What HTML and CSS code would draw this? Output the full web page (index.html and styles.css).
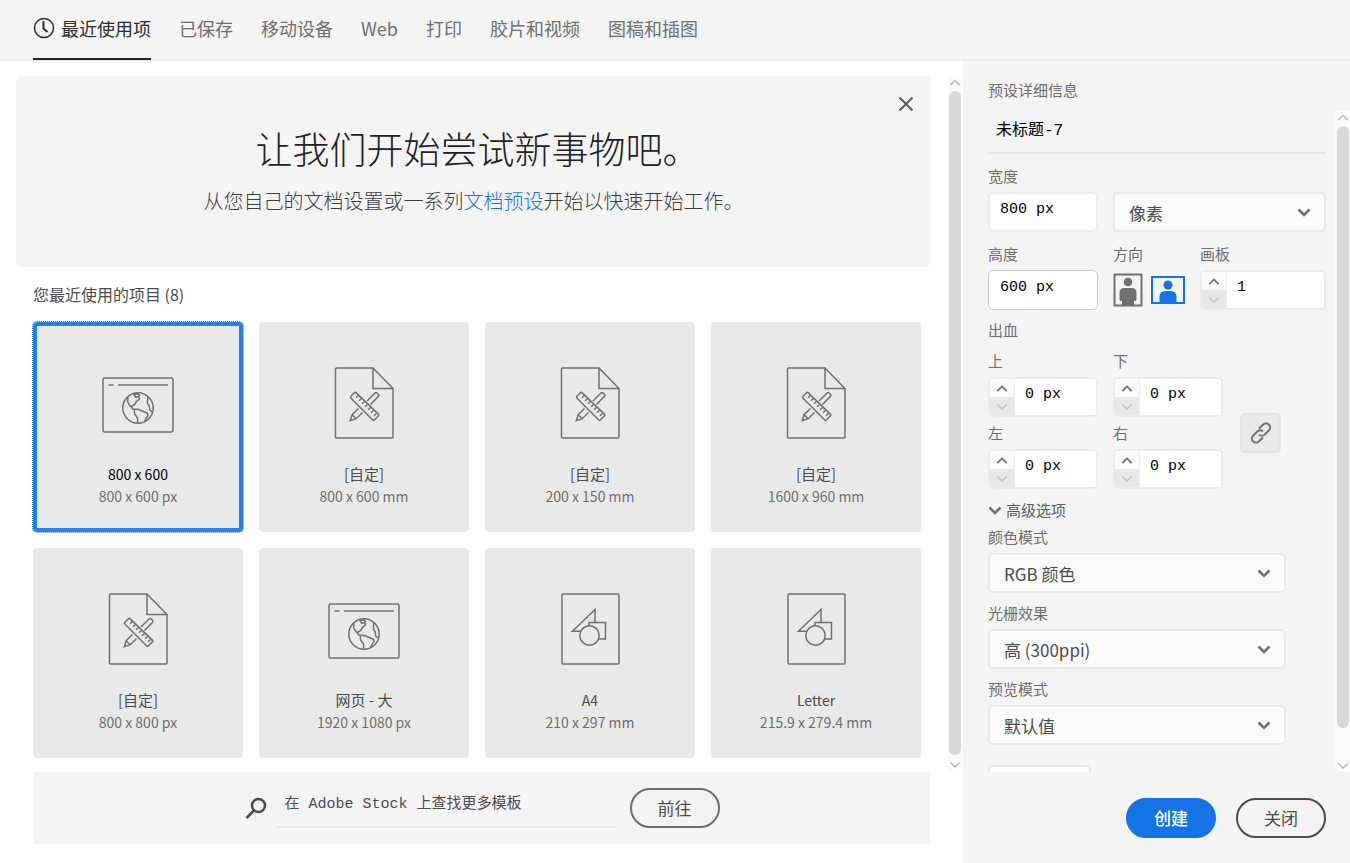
FILE: index.html
```html
<!DOCTYPE html>
<html lang="zh-CN">
<head>
<meta charset="utf-8">
<title>新建文档</title>
<link rel="stylesheet" href="styles.css">
</head>
<body>
<svg class="defs" aria-hidden="true">
  <symbol id="web" viewBox="0 0 74 74">
    <rect x="2" y="12" width="70" height="54" rx="2"/>
    <path class="thin" d="M7.500 19h5M17 19h50"/>
    <circle cx="37" cy="42" r="15.200"/>
    <path d="M32.500 27.600l2 3.600 3.300-.8 .7 2.400-3.300 3-1.700 2.800-3 1.800 1.200 2.600 5.800 .6 6 2.400 3 1.200 .4 2.400-1.600 2.400-1.600 3.400M27 31.200l-.4 4.400 2 3.600 4.600 4.800 .4 4 3 4v4.800M46.800 31l-.4 6 1.800 3 .6 4 3 2.400"/>
    <path d="M33.500 28.500l3-.8 2.500 2.200"/>
  </symbol>
  <symbol id="custom" viewBox="0 0 74 74">
    <path d="M9.500 2H46l20 20.500V71a1 1 0 0 1-1 1H9.500a1 1 0 0 1-1-1V3a1 1 0 0 1 1-1zM46 2v20.500h20"/>
    <path d="M27.600 26.600l-3.800 4a1 1 0 0 0 0 1.400l22 22a1 1 0 0 0 1.400 0l4.400-4.200a1 1 0 0 0 0-1.400L29 26.600a1 1 0 0 0-1.400 0z"/>
    <path d="M31.500 29.500l-2.500 2.300M34.500 32.500l-2.500 2.300M37.500 35.500l-2.500 2.300M40.500 38.500l-2.500 2.300M43.500 41.500l-2.500 2.300M46.500 44.500l-2.500 2.300M49.500 47.500l-2.500 2.300"/>
    <path d="M40 35l8-8a1.500 1.500 0 0 1 2.200 0l1.200 1.200a1.500 1.500 0 0 1 0 2.200L43.500 38.500M35.500 46.500l-6.200 6.200-6 2 1.800-6L31.500 42.500M25.100 48.700l4.200 4"/>
  </symbol>
  <symbol id="art" viewBox="0 0 74 74">
    <rect x="9" y="2" width="57" height="70" rx="1"/>
    <path d="M27.500 39.300H19.500L42 17.500v13M36 34v-3.500h16.500V47H46"/>
    <circle cx="36.500" cy="43.500" r="9.700"/>
  </symbol>
  <symbol id="down" viewBox="0 0 14 10"><path d="M1.500 2.500L7 8l5.500-5.500"/></symbol>
  <symbol id="up" viewBox="0 0 14 10"><path d="M1.500 8L7 2.500 12.500 8"/></symbol>
</svg>

<header class="tabs">
  <nav class="tab-list">
    <a class="tab active" href="#recent">
      <svg class="clock" viewBox="0 0 22 22"><circle cx="11" cy="11" r="9.500"/><path d="M10.500 4V11.500l4 3.500"/></svg>
      最近使用项</a>
    <a class="tab" href="#saved">已保存</a>
    <a class="tab" href="#mobile">移动设备</a>
    <a class="tab" href="#web-presets">Web</a>
    <a class="tab" href="#print">打印</a>
    <a class="tab" href="#film">胶片和视频</a>
    <a class="tab" href="#illustration">图稿和插图</a>
  </nav>
</header>

<div class="body">
  <main class="left">
    <div class="browse">
      <div class="browse-content">
        <section class="hero">
          <button class="hero-close" aria-label="关闭横幅"><svg viewBox="0 0 16 16"><path d="M1.500 1.500l13 13M14.500 1.500l-13 13"/></svg></button>
          <h1>让我们开始尝试新事物吧。</h1>
          <p>从您自己的文档设置或一系列<a href="#presets">文档预设</a>开始以快速开始工作。</p>
        </section>
        <section class="recent">
          <h2>您最近使用的项目&nbsp;(8)</h2>
          <div class="cards">
            <button class="card selected"><svg><use href="#web"/></svg><span class="name">800 x 600</span><span class="size">800 x 600 px</span></button>
            <button class="card"><svg><use href="#custom"/></svg><span class="name han">[自定]</span><span class="size">800 x 600 mm</span></button>
            <button class="card"><svg><use href="#custom"/></svg><span class="name han">[自定]</span><span class="size">200 x 150 mm</span></button>
            <button class="card"><svg><use href="#custom"/></svg><span class="name han">[自定]</span><span class="size">1600 x 960 mm</span></button>
            <button class="card"><svg><use href="#custom"/></svg><span class="name han">[自定]</span><span class="size">800 x 800 px</span></button>
            <button class="card"><svg><use href="#web"/></svg><span class="name han">网页 - 大</span><span class="size">1920 x 1080 px</span></button>
            <button class="card"><svg><use href="#art"/></svg><span class="name">A4</span><span class="size">210 x 297 mm</span></button>
            <button class="card"><svg><use href="#art"/></svg><span class="name">Letter</span><span class="size">215.9 x 279.4 mm</span></button>
          </div>
        </section>
      </div>
      <div class="scrollbar"><svg><use href="#up"/></svg><div class="thumb"></div><svg><use href="#down"/></svg></div>
    </div>
    <form class="stock">
      <svg class="search" viewBox="0 0 24 24"><circle cx="14.500" cy="9.500" r="6.500"/><path d="M10 14.500L2.500 22"/></svg>
      <input class="stock-input" type="text" aria-label="查找模板" placeholder="在 Adobe Stock 上查找更多模板">
      <button class="pill" type="button">前往</button>
    </form>
  </main>

  <aside class="details">
    <h2 class="label">预设详细信息</h2>
    <div class="details-scroll">
      <div class="fields">
        <input class="doc-name" type="text" aria-label="名称" value="未标题-7">
        <div class="row">
          <div class="field short"><label class="label" for="w">宽度</label><input class="box" id="w" type="text" value="800 px"></div>
          <div class="field grow unit">
            <div class="select"><select aria-label="单位"><option>像素</option></select><svg><use href="#down"/></svg></div>
          </div>
        </div>
        <div class="row">
          <div class="field short"><label class="label" for="h">高度</label><input class="box focus" id="h" type="text" value="600 px"></div>
          <div class="field">
            <span class="label">方向</span>
            <div class="orient">
              <button class="plain" aria-label="纵向"><svg class="portrait" viewBox="0 0 30 34"><rect x="1.500" y="1.500" width="27" height="31"/><circle cx="15" cy="9" r="4.300"/><path d="M6.500 27v-7q0-5 5-5h7q5 0 5 5v7q0 1-2.500 1v4.500h-12v-4.500q-2.500 0-2.500-1z"/></svg></button>
              <button class="plain" aria-label="横向"><svg class="landscape" viewBox="0 0 34 28"><rect x="1" y="1" width="32" height="26"/><circle cx="17" cy="9" r="4.500"/><path d="M8.500 26v-5q0-6 6-6h5q6 0 6 6v5z"/></svg></button>
            </div>
          </div>
          <div class="field grow"><label class="label" for="boards">画板</label>
            <div class="spin"><div class="steps"><button aria-label="增加"><svg><use href="#up"/></svg></button><button disabled aria-label="减少"><svg><use href="#down"/></svg></button></div><input id="boards" type="text" value="1"></div>
          </div>
        </div>
        <p class="label bleed-title">出血</p>
        <div class="bleed">
          <div class="bleed-grid">
            <div class="field"><label class="label" for="bt">上</label>
              <div class="spin"><div class="steps"><button aria-label="增加"><svg><use href="#up"/></svg></button><button disabled aria-label="减少"><svg><use href="#down"/></svg></button></div><input id="bt" type="text" value="0 px"></div></div>
            <div class="field"><label class="label" for="bb">下</label>
              <div class="spin"><div class="steps"><button aria-label="增加"><svg><use href="#up"/></svg></button><button disabled aria-label="减少"><svg><use href="#down"/></svg></button></div><input id="bb" type="text" value="0 px"></div></div>
            <div class="field"><label class="label" for="bl">左</label>
              <div class="spin"><div class="steps"><button aria-label="增加"><svg><use href="#up"/></svg></button><button disabled aria-label="减少"><svg><use href="#down"/></svg></button></div><input id="bl" type="text" value="0 px"></div></div>
            <div class="field"><label class="label" for="br">右</label>
              <div class="spin"><div class="steps"><button aria-label="增加"><svg><use href="#up"/></svg></button><button disabled aria-label="减少"><svg><use href="#down"/></svg></button></div><input id="br" type="text" value="0 px"></div></div>
          </div>
          <button class="link" aria-label="链接出血"><svg viewBox="0 0 24 24"><path d="M10 7.500l4-3.800a4 4 0 0 1 6 5.600l-4.300 4.300a4 4 0 0 1-5.700 0M14 16.500l-4 3.800a4 4 0 0 1-6-5.600l4.300-4.300a4 4 0 0 1 5.700 0"/></svg></button>
        </div>
        <button class="advanced label"><svg><use href="#down"/></svg>高级选项</button>
        <div class="options">
          <div class="field"><label class="label" for="mode">颜色模式</label><div class="select"><select id="mode"><option>RGB 颜色</option></select><svg><use href="#down"/></svg></div></div>
          <div class="field"><label class="label" for="raster">光栅效果</label><div class="select"><select id="raster"><option>高 (300ppi)</option></select><svg><use href="#down"/></svg></div></div>
          <div class="field"><label class="label" for="preview">预览模式</label><div class="select"><select id="preview"><option>默认值</option></select><svg><use href="#down"/></svg></div></div>
        </div>
        <button class="more" aria-label="更多设置"></button>
      </div>
      <div class="scrollbar"><svg><use href="#up"/></svg><div class="thumb"></div><svg><use href="#down"/></svg></div>
    </div>
    <footer class="actions">
      <button class="pill primary">创建</button>
      <button class="pill dark">关闭</button>
    </footer>
  </aside>
</div>
</body>
</html>
```
FILE: styles.css
```css
* { box-sizing: border-box; }
body {
  margin: 0;
  height: 100vh;
  display: flex;
  flex-direction: column;
  overflow: hidden;
  background: #fff;
  color: #4b4b4b;
  font-family: "Noto Sans CJK SC", "Noto Sans", sans-serif;
  font-size: 15px;
}
button, input, select { font: inherit; color: inherit; margin: 0; }
button { padding: 0; border: 0; background: none; }
h1, h2, p { margin: 0; font-weight: 400; }
a { text-decoration: none; }
svg { display: block; fill: none; stroke: #707070; flex: none; }
.defs { position: absolute; width: 0; height: 0; }

/* Tabs */
.tabs { height: 61px; flex: none; background: #f4f4f4; border-bottom: 2px solid #eaeaea; padding-left: 33px; }
.tab-list { display: flex; gap: 28px; height: 60px; }
.tab {
  display: flex;
  align-items: center;
  height: 60px;
  padding-bottom: 2px;
  font-size: 18px;
  color: #6e6e6e;
  border-bottom: 2px solid transparent;
}
.tab.active { color: #2c2c2c; border-color: #222; gap: 6px; }
.clock { width: 22px; height: 22px; stroke: #2c2c2c; stroke-width: 1.500; }
.clock path { stroke-width: 2; }

.body { flex: 1; min-height: 0; display: flex; }
.left { flex: 1; min-width: 0; display: flex; flex-direction: column; }
.browse { display: flex; flex: 1; min-height: 0; }
.browse-content { flex: 1; min-width: 0; padding: 15px 16px 0; overflow: hidden; }

/* Hero banner */
.hero {
  position: relative;
  height: 191px;
  padding-top: 44px;
  border-radius: 6px;
  background: #f4f4f4;
  text-align: center;
}
.hero h1 { padding-left: 8px; font-size: 37px; line-height: 56px; font-weight: 300; color: #222; }
.hero p { margin-top: 9px; font-size: 20px; line-height: 32px; font-weight: 300; color: #3c3c3c; }
.hero a { color: #1473e6; }
.hero-close { position: absolute; top: 20px; right: 17px; }
.hero-close svg { width: 16px; height: 16px; stroke: #5a5a5a; stroke-width: 2; }

/* Recent presets */
.recent { padding: 15px 10px 0 17px; }
.recent h2 { font-size: 16px; line-height: 24px; }
.cards { margin-top: 16px; display: grid; grid-template-columns: repeat(4, 1fr); gap: 16px; }
.card {
  height: 210px;
  display: flex;
  flex-direction: column;
  align-items: center;
  justify-content: flex-start;
  padding-top: 44px;
  background: #e9e9e9;
  border-radius: 4px;
  font-size: 14px;
  line-height: 22px;
}
.card svg { width: 74px; height: 74px; stroke-width: 1.500; }
.card .name { margin-top: 23px; }
.card .han { font-size: 15px; }
.card .size { color: #6e6e6e; }
.card.selected { box-shadow: inset 0 0 0 4px #2680eb; outline: 1px dotted #2680eb; }
.card.selected .name { color: #000; }

/* Scrollbars */
.scrollbar {
  width: 15px;
  flex: none;
  display: flex;
  flex-direction: column;
  align-items: center;
  gap: 4px;
  padding: 2px 0;
  background: #fafafa;
}
.browse .scrollbar { margin: 15px 1px 0 0; }
.scrollbar svg { width: 12px; height: 9px; stroke: #b0b0b0; stroke-width: 1.500; }
.thumb { flex: 1; width: 12px; margin-bottom: 1px; border-radius: 6px; background: #d8d8d8; }
.details-scroll .thumb { margin-bottom: 29px; }

/* Stock search */
.stock {
  flex: none;
  height: 72px;
  margin: 1px 33px 19px;
  display: flex;
  align-items: center;
  justify-content: center;
  background: #f4f4f4;
  border-radius: 4px;
}
.search { width: 24px; height: 24px; stroke: #4b4b4b; stroke-width: 2.500; margin-right: 9px; }
.stock-input {
  width: 340px;
  height: 40px;
  padding: 0 8px 6px;
  border: 0;
  border-bottom: 2px solid #e8e8e8;
  background: none;
  font-family: "Liberation Mono", "Noto Sans CJK SC", monospace;
}
.stock-input::placeholder { color: #4b4b4b; opacity: 1; }
.pill {
  width: 90px;
  height: 40px;
  border: 2px solid #6e6e6e;
  border-radius: 20px;
  font-size: 17px;
  line-height: 34px;
}
.stock .pill { margin-left: 13px; }

/* Details panel */
.details { width: 387px; flex: none; background: #f4f4f4; display: flex; flex-direction: column; }
.label { display: block; font-size: 15px; line-height: 20px; color: #6e6e6e; }
.details > .label { margin: 19px 0 11px 25px; }
.details-scroll { flex: 1; min-height: 0; display: flex; }
.fields { flex: 1; min-width: 0; padding: 0 9px 0 25px; overflow: hidden; }
.doc-name {
  display: block;
  width: 100%;
  height: 43px;
  padding: 0 8px 8px;
  border: 0;
  border-bottom: 2px solid #e6e6e6;
  background: none;
  color: #000;
  font-family: "Liberation Mono", "Noto Sans CJK SC", monospace;
  font-size: 16px;
}
.row { display: flex; gap: 15px; margin-top: 12px; }
.field { display: flex; flex-direction: column; gap: 6px; min-width: 0; }
.short { width: 110px; }
.grow { flex: 1; }
.unit { justify-content: flex-end; }
.box, .spin, .select select {
  width: 100%;
  height: 40px;
  border: 2px solid #ebebeb;
  border-radius: 5px;
  background: #fff;
}
.box { padding: 0 10px 6px; }
.box, .spin input { font-family: "Liberation Mono", monospace; color: #000; }
.box.focus { border: 1px solid #c8c8c8; padding: 0 11px 6px; }
.spin { display: flex; overflow: hidden; }
.spin input { flex: 1; min-width: 0; border: 0; border-left: 1px solid #eee; padding: 0 10px 5px; background: #fff; }
.steps { width: 24px; flex: none; display: flex; flex-direction: column; background: #fafafa; }
.steps button { flex: 1; display: flex; align-items: center; justify-content: center; }
.steps button:disabled { background: #e8e8e8; }
.steps svg { width: 12px; height: 9px; stroke-width: 2; }
.steps button:disabled svg { stroke: #c8c8c8; }
.select { display: grid; align-items: center; }
.select > * { grid-area: 1 / 1; }
.select select {
  appearance: none;
  padding: 0 14px;
  background: #fafafa;
  border-color: #e9e9e9;
  font-size: 17px;
}
.select svg { width: 14px; height: 10px; stroke-width: 2.500; justify-self: end; margin-right: 15px; pointer-events: none; }
.orient { display: flex; align-items: center; gap: 8px; height: 40px; width: 72px; }
.portrait { width: 30px; height: 34px; stroke-width: 2; }
.landscape { width: 34px; height: 28px; stroke: #1473e6; stroke-width: 2; }
.portrait circle, .portrait path { fill: #707070; stroke: none; }
.landscape circle, .landscape path { fill: #1473e6; stroke: none; }
.bleed-title { margin-top: 10px; }
.bleed { display: flex; align-items: flex-end; gap: 17px; margin-top: 11px; }
.bleed-grid { display: grid; grid-template-columns: 110px 110px; gap: 6px 15px; }
.link {
  width: 41px;
  height: 40px;
  margin-bottom: 36px;
  display: flex;
  align-items: center;
  justify-content: center;
  background: #eaeaea;
  border: 2px solid #e4e4e4;
  border-radius: 5px;
}
.link svg { width: 24px; height: 24px; stroke-width: 2; }
.advanced { display: flex; align-items: center; gap: 4px; margin-top: 11px; color: #5a5a5a; }
.advanced svg { width: 14px; height: 10px; stroke-width: 2.500; }
.options { display: flex; flex-direction: column; gap: 10px; margin: 7px 40px 0 0; }
.more { display: block; width: 103px; height: 40px; margin-top: 20px; border: 2px solid #e8e8e8; border-radius: 5px; background: #fafafa; }
.actions { height: 91px; flex: none; display: flex; justify-content: flex-end; gap: 20px; padding: 26px 24px 0 0; }
.primary { background: #1473e6; border-color: #1473e6; color: #fff; font-weight: 500; }
.dark { border-color: #4b4b4b; }
```
